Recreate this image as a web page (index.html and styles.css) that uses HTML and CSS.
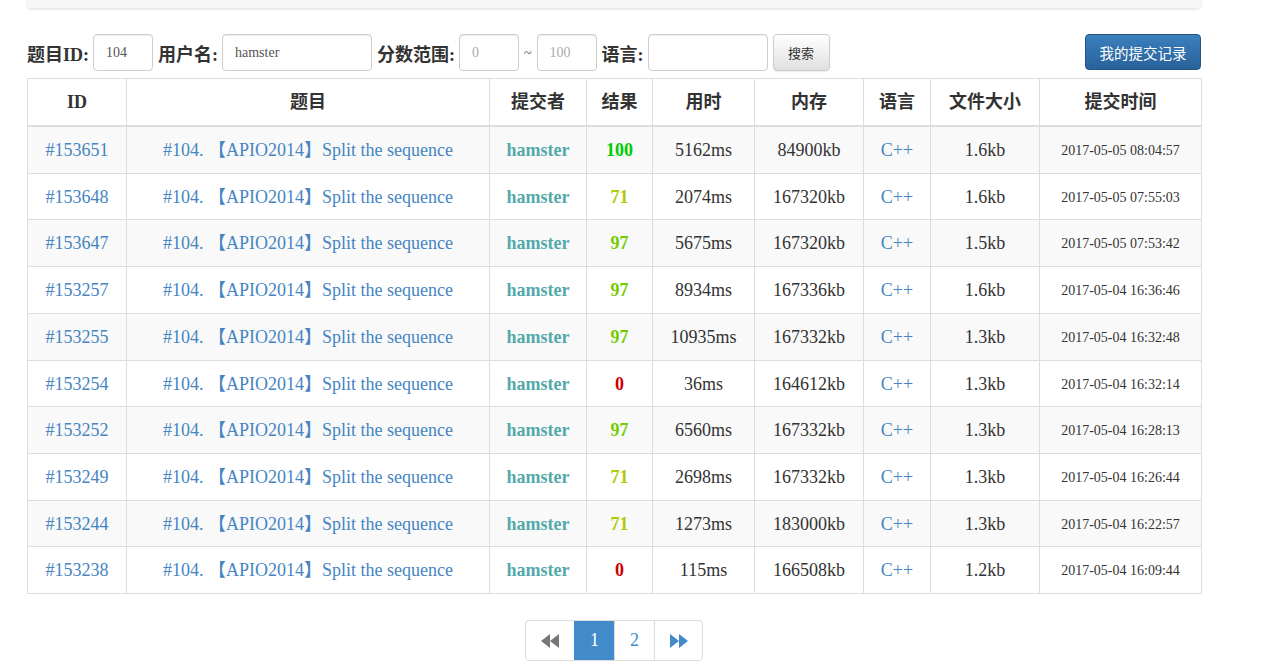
FILE: index.html
```
<!DOCTYPE html>
<html>
<head>
<meta charset="utf-8">
<link rel="stylesheet" href="styles.css">
</head>
<body>
<div class="container">
  <div class="top-panel"></div>
  <form class="filter">
    <label class="lbl">题目ID:</label>
    <input class="inp w60" value="104">
    <label class="lbl">用户名:</label>
    <input class="inp w150" value="hamster">
    <label class="lbl">分数范围:</label>
    <input class="inp w60 ph" value="0">
    <span class="tilde">~</span>
    <input class="inp w60 ph" value="100">
    <label class="lbl">语言:</label>
    <input class="inp w120" value="">
    <button type="button" class="btn-search">搜索</button>
    <span class="spacer"></span>
    <button type="button" class="btn-mine">我的提交记录</button>
  </form>
  <table class="subs">
    <colgroup>
      <col style="width:99px"><col style="width:363px"><col style="width:97px"><col style="width:66px"><col style="width:102px"><col style="width:109px"><col style="width:67px"><col style="width:109px"><col style="width:162px">
    </colgroup>
    <thead>
      <tr><th>ID</th><th>题目</th><th>提交者</th><th>结果</th><th>用时</th><th>内存</th><th>语言</th><th>文件大小</th><th>提交时间</th></tr>
    </thead>
    <tbody>
      <tr><td><a>#153651</a></td><td><a>#104. 【APIO2014】Split the sequence</a></td><td><a class="user">hamster</a></td><td><a class="score s100">100</a></td><td>5162ms</td><td>84900kb</td><td><a>C++</a></td><td>1.6kb</td><td class="time">2017-05-05 08:04:57</td></tr>
      <tr><td><a>#153648</a></td><td><a>#104. 【APIO2014】Split the sequence</a></td><td><a class="user">hamster</a></td><td><a class="score s71">71</a></td><td>2074ms</td><td>167320kb</td><td><a>C++</a></td><td>1.6kb</td><td class="time">2017-05-05 07:55:03</td></tr>
      <tr><td><a>#153647</a></td><td><a>#104. 【APIO2014】Split the sequence</a></td><td><a class="user">hamster</a></td><td><a class="score s97">97</a></td><td>5675ms</td><td>167320kb</td><td><a>C++</a></td><td>1.5kb</td><td class="time">2017-05-05 07:53:42</td></tr>
      <tr><td><a>#153257</a></td><td><a>#104. 【APIO2014】Split the sequence</a></td><td><a class="user">hamster</a></td><td><a class="score s97">97</a></td><td>8934ms</td><td>167336kb</td><td><a>C++</a></td><td>1.6kb</td><td class="time">2017-05-04 16:36:46</td></tr>
      <tr><td><a>#153255</a></td><td><a>#104. 【APIO2014】Split the sequence</a></td><td><a class="user">hamster</a></td><td><a class="score s97">97</a></td><td>10935ms</td><td>167332kb</td><td><a>C++</a></td><td>1.3kb</td><td class="time">2017-05-04 16:32:48</td></tr>
      <tr><td><a>#153254</a></td><td><a>#104. 【APIO2014】Split the sequence</a></td><td><a class="user">hamster</a></td><td><a class="score s0">0</a></td><td>36ms</td><td>164612kb</td><td><a>C++</a></td><td>1.3kb</td><td class="time">2017-05-04 16:32:14</td></tr>
      <tr><td><a>#153252</a></td><td><a>#104. 【APIO2014】Split the sequence</a></td><td><a class="user">hamster</a></td><td><a class="score s97">97</a></td><td>6560ms</td><td>167332kb</td><td><a>C++</a></td><td>1.3kb</td><td class="time">2017-05-04 16:28:13</td></tr>
      <tr><td><a>#153249</a></td><td><a>#104. 【APIO2014】Split the sequence</a></td><td><a class="user">hamster</a></td><td><a class="score s71">71</a></td><td>2698ms</td><td>167332kb</td><td><a>C++</a></td><td>1.3kb</td><td class="time">2017-05-04 16:26:44</td></tr>
      <tr><td><a>#153244</a></td><td><a>#104. 【APIO2014】Split the sequence</a></td><td><a class="user">hamster</a></td><td><a class="score s71">71</a></td><td>1273ms</td><td>183000kb</td><td><a>C++</a></td><td>1.3kb</td><td class="time">2017-05-04 16:22:57</td></tr>
      <tr><td><a>#153238</a></td><td><a>#104. 【APIO2014】Split the sequence</a></td><td><a class="user">hamster</a></td><td><a class="score s0">0</a></td><td>115ms</td><td>166508kb</td><td><a>C++</a></td><td>1.2kb</td><td class="time">2017-05-04 16:09:44</td></tr>
    </tbody>
  </table>
  <div class="pager-wrap">
    <ul class="pager">
      <li class="pg pg-arrow disabled"><svg width="20" height="16" viewBox="0 0 20 16"><path d="M10 1 L1 8 L10 15 Z M19 1 L10 8 L19 15 Z" fill="#777"/></svg></li>
      <li class="pg active">1</li>
      <li class="pg">2</li>
      <li class="pg pg-arrow"><svg width="20" height="16" viewBox="0 0 20 16"><path d="M1 1 L10 8 L1 15 Z M10 1 L19 8 L10 15 Z" fill="#428bca"/></svg></li>
    </ul>
  </div>
</div>
</body>
</html>
```
FILE: styles.css
```
* { box-sizing: border-box; }
html, body { margin: 0; padding: 0; background: #fff; }
body {
  font-family: "Liberation Serif", "Noto Sans CJK SC", serif;
  color: #333;
}
.container {
  width: 1174px;
  margin-left: 27px;
}
.top-panel {
  height: 8px;
  background: #f7f7f7;
  border-radius: 0 0 4px 4px;
  box-shadow: 0 1px 3px rgba(0,0,0,0.14);
}
.filter {
  display: flex;
  align-items: center;
  margin: 26px 0 0 0;
  height: 37px;
}
.lbl {
  font-family: "Liberation Serif", "Noto Sans CJK SC", serif;
  font-weight: bold;
  font-size: 18px;
  color: #333;
  margin-right: 4px;
  white-space: nowrap;
}
.inp {
  height: 37px;
  border: 1px solid #ccc;
  border-radius: 4px;
  font-family: "Liberation Serif", serif;
  font-size: 14px;
  color: #555;
  padding: 0 12px;
  margin-right: 5px;
  box-shadow: inset 0 1px 1px rgba(0,0,0,0.075);
  outline: none;
}
.inp.ph { color: #aaa; }
.w60 { width: 60px; }
.w150 { width: 150px; }
.w120 { width: 120px; }
.tilde {
  font-size: 14px;
  color: #555;
  margin: 2px 5px 0 0;
}
.btn-search {
  width: 57px;
  height: 37px;
  border: 1px solid #ccc;
  border-radius: 4px;
  background: linear-gradient(#fff, #e0e0e0);
  font-family: "Noto Sans CJK SC", sans-serif;
  font-size: 13px;
  color: #333;
  padding: 0;
  box-shadow: 0 1px 1px rgba(0,0,0,0.08);
}
.spacer { flex: 1; }
.btn-mine {
  width: 116px;
  height: 36px;
  margin-top: -1px;
  border: 1px solid #245580;
  border-radius: 4px;
  background: linear-gradient(#3a80bd, #2a619a);
  color: #fff;
  font-family: "Noto Sans CJK SC", sans-serif;
  font-size: 14.5px;
  padding: 0;
}
.subs {
  margin-top: 7px;
  width: 1174px;
  border-collapse: collapse;
  table-layout: fixed;
  border: 1px solid #ddd;
}
.subs th, .subs td {
  border: 1px solid #ddd;
  text-align: center;
  white-space: nowrap;
  overflow: hidden;
}
.subs th {
  font-family: "Liberation Serif", "Noto Sans CJK SC", serif;
  font-weight: bold;
  font-size: 18px;
  color: #333;
  padding: 9px 0 8px;
  line-height: 29px;
  border-bottom: 2px solid #ddd;
}
.subs td {
  font-size: 18px;
  padding: 9px 0 7px;
  line-height: 29.7px;
  color: #333;
}
.subs tbody tr:nth-child(odd) td { background: #f9f9f9; }
.subs a { color: #4585c2; text-decoration: none; }
.subs td.time { font-size: 14px; }
.subs a.user { color: #53a9a9; font-weight: bold; }
.subs a.score { font-weight: bold; }
.s100 { color: #00cc00 !important; }
.s97 { color: #74cc00 !important; }
.s71 { color: #b0cc00 !important; }
.s0 { color: #cc0000 !important; }
.pager-wrap {
  display: flex;
  justify-content: center;
  margin-top: 26px;
}
.pager {
  display: flex;
  list-style: none;
  margin: 0;
  padding: 0;
  border: 1px solid #ddd;
  border-radius: 4px;
  height: 41px;
  overflow: hidden;
}
.pg {
  width: 40px;
  display: flex;
  align-items: center;
  justify-content: center;
  font-size: 18px;
  color: #428bca;
  border-left: 1px solid #ddd;
}
.pg:first-child { border-left: none; }
.pg-arrow { width: 48px; }
.pg.active {
  background: #428bca;
  color: #fff;
  border-left-color: #428bca;
}
```
